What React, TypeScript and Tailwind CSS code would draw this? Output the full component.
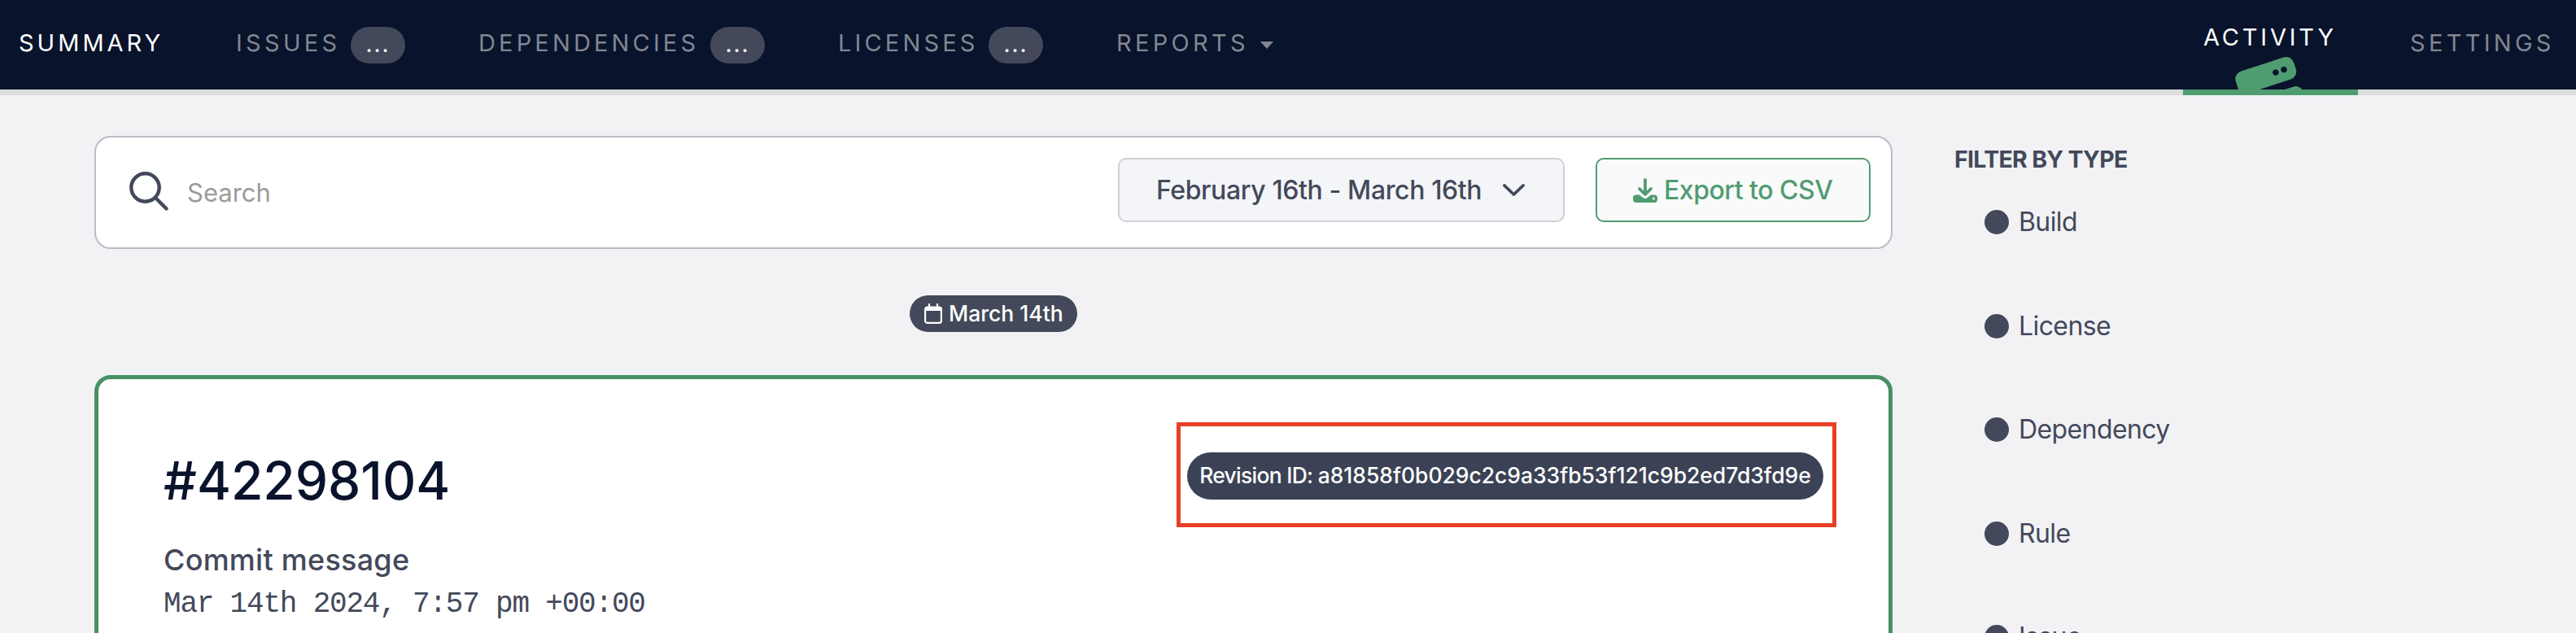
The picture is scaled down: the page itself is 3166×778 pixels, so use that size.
import React from "react";

type NavItem = { label: string; width: string; badge?: boolean; tracking: string };

const navItems: NavItem[] = [
  { label: "SUMMARY", width: "w-[267px] text-white", tracking: "tracking-[4px]" },
  { label: "ISSUES", width: "w-[298px] text-[#828692]", badge: true, tracking: "tracking-[4.3px]" },
  { label: "DEPENDENCIES", width: "w-[442px] text-[#828692]", badge: true, tracking: "tracking-[4.15px]" },
  { label: "LICENSES", width: "w-[342px] text-[#828692]", badge: true, tracking: "tracking-[4.15px]" },
];

const filters = ["Build", "License", "Dependency", "Rule", "Issue"];

function CountBadge() {
  return (
    <span className="mr-[90px] flex h-[45px] w-[67px] items-center justify-center rounded-full bg-[#43495a] pb-[2px] text-[28px] leading-none tracking-[2px] text-white">
      ...
    </span>
  );
}

function NavBar() {
  return (
    <nav className="flex h-[117px] shrink-0 border-b-[7px] border-[#dcdcdc] bg-[#09132b] pl-[23px] text-[29px] leading-[35px] whitespace-nowrap">
      {navItems.map((item) => (
        <div key={item.label} className={`flex shrink-0 items-center justify-between ${item.width}`}>
          <span className={`-mt-[6px] ${item.tracking}`}>{item.label}</span>
          {item.badge && <CountBadge />}
        </div>
      ))}
      <div className="flex items-center text-[#828692]">
        <span className="-mt-[6px] w-[177px] tracking-[4.3px]">REPORTS</span>
        <svg className="h-[9px] w-[16px]" viewBox="0 0 16 9" fill="currentColor">
          <path d="M0 0H16L8 9Z" />
        </svg>
      </div>
      <div className="-mb-[7px] ml-auto flex w-[215px] flex-col border-b-[7px] border-[#509c71] text-white">
        <span className="mt-[28px] pl-[25px] tracking-[3.8px]">ACTIVITY</span>
        <svg className="mt-auto ml-[60px] h-[42px] w-[100px]" viewBox="0 0 100 42" fill="#509c71">
          <g transform="rotate(-18 41.8 24.5)">
            <rect x="4.3" y="10.3" width="75" height="28.4" rx="10" />
            <circle cx="54.4" cy="24.9" r="3.7" fill="#09132b" />
            <circle cx="65.1" cy="24.7" r="3.7" fill="#09132b" />
            <rect x="4.3" y="48.3" width="75" height="28.4" rx="10" />
          </g>
        </svg>
      </div>
      <div className="flex w-[268px] items-center pl-[64px] text-[#828692]">
        <span className="-mt-[6px] tracking-[4.3px]">SETTINGS</span>
      </div>
    </nav>
  );
}

function SearchBar() {
  return (
    <div className="flex h-[139px] items-center rounded-[20px] border-2 border-[#b9bdc6] bg-white pr-[25px] pl-[41px]">
      <svg className="-mt-[3px] h-[48px] w-[48px]" viewBox="0 0 48 48" fill="none" stroke="#43495a" strokeWidth="4.4" strokeLinecap="round">
        <circle cx="19.5" cy="19.5" r="17.2" />
        <path d="M32 32L45.5 45.5" />
      </svg>
      <span className="mt-[1px] ml-[23px] text-[31px] text-[#9b9b9b]">Search</span>
      <button className="-mt-[6px] ml-auto flex h-[79px] w-[549px] items-center rounded-[10px] border-2 border-[#cfd0d4] bg-[#f4f5f8] pl-[45px] text-left text-[32px] font-medium whitespace-nowrap text-[#43495a]">
        <span className="w-[426px] tracking-[-0.39px]">February 16th - March 16th</span>
        <svg className="h-[15px] w-[27px]" viewBox="0 0 27 15" fill="none" stroke="currentColor" strokeWidth="3.8" strokeLinecap="round" strokeLinejoin="round">
          <path d="M2 2L13.5 13L25 2" />
        </svg>
      </button>
      <button className="-mt-[6px] ml-[38px] flex h-[79px] w-[338px] items-center rounded-[10px] border-2 border-[#509c71] bg-[#fafafa] pl-[44px] text-[32px] font-medium whitespace-nowrap text-[#509c71]">
        <svg className="h-[30px] w-[30px]" viewBox="0 0 30 30" fill="currentColor">
          <path d="M15 2V18M8 13L15 20L22 13" fill="none" stroke="currentColor" strokeWidth="3.8" strokeLinecap="round" strokeLinejoin="round" />
          <path d="M4 20.5H8L12.3 24Q15 26 17.7 24L22 20.5H26Q30 20.5 30 24V26Q30 30 26 30H4Q0 30 0 26V24Q0 20.5 4 20.5Z" />
          <circle cx="25.4" cy="25" r="1.5" fill="#fafafa" />
        </svg>
        <span className="ml-[8px] tracking-[-0.5px]">Export to CSV</span>
      </button>
    </div>
  );
}

function DatePill() {
  return (
    <div className="mt-[57px] ml-[1002px] flex h-[45px] w-[206px] items-center rounded-full bg-[#43495a] pl-[18px] text-[26.5px] font-medium whitespace-nowrap text-white">
      <svg className="h-[25px] w-[22px]" viewBox="0 0 22 25" fill="none" stroke="currentColor" strokeWidth="2.2">
        <rect x="1.1" y="4.5" width="19.8" height="19.3" rx="2.5" />
        <path d="M1 4.5H21V9H1Z" fill="currentColor" stroke="none" />
        <path d="M6 1V5M16 1V5" strokeLinecap="round" />
      </svg>
      <span className="ml-[8px]">March 14th</span>
    </div>
  );
}

function BuildCard() {
  return (
    <article className="mt-[53px] flex h-[400px] items-start justify-between rounded-[20px] border-[5px] border-[#489064] bg-white pr-[64px] pl-[80px] whitespace-nowrap">
      <div className="text-[#43495a]">
        <h1 className="mt-[87px] text-[64px] leading-[76px] font-medium text-[#09132b]">#42298104</h1>
        <p className="mt-[37px] text-[36px] leading-[44px] font-medium tracking-[0.25px]">Commit message</p>
        <p className="mt-[12px] font-['Liberation_Mono',monospace] text-[36px] leading-[42px] tracking-[-1.2px]">
          Mar 14th 2024, 7:57 pm +00:00
        </p>
      </div>
      <div className="mt-[53px] flex h-[129px] w-[811px] border-[5px] border-[#e84025] pt-[32px] pl-[8px]">
        <div className="flex h-[58px] w-[782px] items-center justify-center rounded-full bg-[#3b4255] text-[26.5px] font-medium text-white">
          <p>
            <span className="tracking-[-0.75px]">Revision ID: </span>
            <span className="tracking-[-0.03px]">a81858f0b029c2c9a33fb53f121c9b2ed7d3fd9e</span>
          </p>
        </div>
      </div>
    </article>
  );
}

function FilterSidebar() {
  return (
    <aside className="w-[300px] text-[#43495a]">
      <h2 className="mt-[11px] text-[28.5px] leading-[36px] font-bold tracking-[-0.7px] whitespace-nowrap">FILTER BY TYPE</h2>
      <ul className="mt-[44px]">
        {filters.map((name) => (
          <li key={name} className="flex h-[127.5px] items-start pl-[37px] text-[32px] leading-[30px] tracking-[-0.6px]">
            <span className="mr-[12px] h-[30px] w-[30px] rounded-full bg-[#43495a]" />
            {name}
          </li>
        ))}
      </ul>
    </aside>
  );
}

export default function App() {
  return (
    <div className="flex h-[778px] w-[3166px] flex-col overflow-hidden bg-[#f2f2f5] font-['Inter',sans-serif]">
      <NavBar />
      <div className="flex items-start">
        <main className="mt-[50px] ml-[116px] w-[2210px]">
          <SearchBar />
          <DatePill />
          <BuildCard />
        </main>
        <div className="mt-[50px] ml-[76px]">
          <FilterSidebar />
        </div>
      </div>
    </div>
  );
}
